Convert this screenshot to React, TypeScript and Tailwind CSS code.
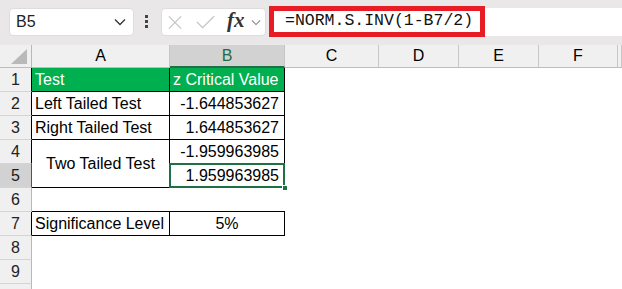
import React from 'react';

const GREEN_SEL = '#1e7145';

type CellProps = {
  className?: string;
  children?: React.ReactNode;
};

const Cell: React.FC<CellProps> = ({ className = '', children }) => (
  <div className={`h-full flex items-center overflow-hidden whitespace-nowrap ${className}`}>{children}</div>
);

// row 10 only peeks in at the bottom edge, its number sits below the fold
const RowHead: React.FC<{ n: number; selected?: boolean; edge?: string; hideLabel?: boolean }> = ({ n, selected, edge, hideLabel }) => (
  <div
    className={`flex items-center justify-center border-b border-b-[#d4d4d4] border-r ${
      edge ?? 'border-r-[#b8b8b8]'
    } ${selected ? 'bg-[#d2d2d2] text-[#1a1a1a]' : 'bg-[#f0f0f0] text-[#222]'}`}
  >
    {hideLabel ? '' : n}
  </div>
);

const Chevron: React.FC<{ className?: string }> = ({ className }) => (
  <svg viewBox="0 0 12 8" className={className} fill="none" stroke="currentColor" strokeWidth="1.3">
    <path d="M1 1.5 L6 6.5 L11 1.5" />
  </svg>
);

const App: React.FC = () => {
  const blank = (key: string) => <Cell key={key} />;
  const emptyRest = (r: number) => ['C', 'D', 'E', 'F', 'G'].map((c) => blank(`${c}${r}`));

  return (
    <div className="w-[622px] h-[289px] overflow-hidden bg-white text-[16px] text-black" style={{ fontFamily: '"Liberation Sans", Arial, sans-serif' }}>
      {/* formula bar */}
      <div className="h-[45px] bg-[#e9e7e8] flex items-start">
        <div className="ml-[9px] mt-[8px] w-[125px] h-[28px] bg-white rounded-[4px] border border-[#dedcdd] flex items-center justify-between pl-[6px] pr-[7px]">
          <span className="text-[16px] text-[#222]">B5</span>
          <Chevron className="w-[12px] h-[8px] text-[#333]" />
        </div>
        <div className="ml-[11px] mt-[15px] flex flex-col gap-[2px]">
          <div className="w-[3px] h-[3px] bg-[#444]" />
          <div className="w-[3px] h-[3px] bg-[#444]" />
          <div className="w-[3px] h-[3px] bg-[#444]" />
        </div>
        <div className="ml-[13px] mt-[8px] w-[105px] h-[28px] bg-white rounded-[4px] border border-[#dedcdd] flex items-center pl-[5px]">
          <svg viewBox="0 0 16 16" className="w-[16px] h-[15px]" fill="none" stroke="#c4c4c4" strokeWidth="1.3">
            <path d="M1.5 1.5 L14.5 14.5 M14.5 1.5 L1.5 14.5" />
          </svg>
          <svg viewBox="0 0 20 14" className="ml-[13px] w-[19px] h-[14px]" fill="none" stroke="#c4c4c4" strokeWidth="1.3">
            <path d="M1 7 L7 13 L19 1" />
          </svg>
          <span className="ml-[12px] text-[21px] leading-none font-bold italic text-[#333] -mt-[3px]" style={{ fontFamily: '"Liberation Serif", "Times New Roman", serif' }}>
            fx
          </span>
          <Chevron className="ml-[6px] w-[10px] h-[7px] text-[#888]" />
        </div>
        <div className="ml-[3px] mt-[6px] w-[216px] h-[31px] border-[5px] border-[#e81c24] bg-white flex items-center pl-[11px]">
          <span className="text-[16.5px] leading-none text-[#111]" style={{ fontFamily: '"Liberation Mono", "Courier New", monospace' }}>
            =NORM.S.INV(1-B7/2)
          </span>
        </div>
        <div className="flex-1 mt-[8px] h-[28px] bg-white" />
      </div>

      {/* sheet */}
      <div className="grid grid-cols-[32px_138px_115px_94px_80px_80px_79px_1fr] grid-rows-[23px_repeat(10,24px)]">
        {/* column headers */}
        <div className="relative bg-[#f0f0f0] border-r border-r-[#b8b8b8] border-b border-b-[#bdbdbd]">
          <div className="absolute right-[4px] bottom-[3px] w-0 h-0 border-l-[16px] border-l-transparent border-b-[15px] border-b-[#b9b9b9]" />
        </div>
        <div className="flex items-center justify-center bg-[#f0f0f0] border-r border-r-[#c6c6c6] border-b border-b-[#bdbdbd]">A</div>
        <div className="flex items-center justify-center bg-[#d2d2d2] text-[#1e6b41] border-r border-r-[#c6c6c6] border-b-2 border-b-[#1e7145]">B</div>
        {['C', 'D', 'E', 'F', 'G'].map((c) => (
          <div key={c} className="flex items-center justify-center bg-[#f0f0f0] border-r border-r-[#c6c6c6] border-b border-b-[#bdbdbd]">
            {c === 'G' ? '' : c}
          </div>
        ))}

        {/* row 1 */}
        <RowHead n={1} edge="border-r-black" />
        <Cell className="bg-[#00b050] text-white pl-[3px] border-r border-b border-black">Test</Cell>
        <Cell className="bg-[#00b050] text-white pl-[3px] border-r border-b border-black">z Critical Value</Cell>
        {emptyRest(1)}

        {/* row 2 */}
        <RowHead n={2} edge="border-r-black" />
        <Cell className="pl-[3px] border-r border-b border-black">Left Tailed Test</Cell>
        <Cell className="justify-end pr-[5px] border-r border-b border-black">-1.644853627</Cell>
        {emptyRest(2)}

        {/* row 3 */}
        <RowHead n={3} edge="border-r-black" />
        <Cell className="pl-[3px] border-r border-b border-black">Right Tailed Test</Cell>
        <Cell className="justify-end pr-[5px] border-r border-b border-black">1.644853627</Cell>
        {emptyRest(3)}

        {/* row 4 (A4:A5 merged) */}
        <RowHead n={4} edge="border-r-black" />
        <Cell className="row-span-2 justify-center border-r border-b border-black">Two Tailed Test</Cell>
        <Cell className="justify-end pr-[5px] border-r border-b border-black">-1.959963985</Cell>
        {emptyRest(4)}

        {/* row 5 */}
        <RowHead n={5} selected edge="border-r-[#1e7145]" />
        <div className="relative h-full flex items-center justify-end pr-[5px] border-r border-b border-black">
          1.959963985
          <div className="absolute -left-px -top-px -right-px -bottom-px border-2" style={{ borderColor: GREEN_SEL }} />
          <div className="absolute -right-[4px] -bottom-[4px] w-[6px] h-[6px] border border-white" style={{ backgroundColor: GREEN_SEL }} />
        </div>
        {emptyRest(5)}

        {/* row 6 */}
        <RowHead n={6} />
        <Cell className="border-b border-black" />
        <Cell className="border-b border-black" />
        {emptyRest(6)}

        {/* row 7 */}
        <RowHead n={7} edge="border-r-black" />
        <Cell className="pl-[3px] border-r border-b border-black">Significance Level</Cell>
        <Cell className="justify-center border-r border-b border-black">5%</Cell>
        {emptyRest(7)}

        {[8, 9, 10].map((r) => (
          <React.Fragment key={r}>
            <RowHead n={r} hideLabel={r === 10} />
            <Cell />
            <Cell />
            {emptyRest(r)}
          </React.Fragment>
        ))}
      </div>
    </div>
  );
};

export default App;
